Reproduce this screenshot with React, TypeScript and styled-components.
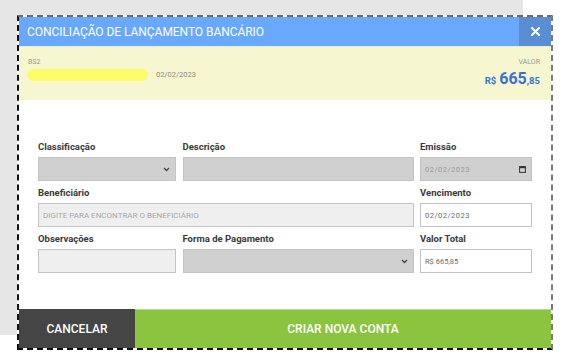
import React from "react";
import styled, { createGlobalStyle } from "styled-components";

const Global = createGlobalStyle`
  html, body { margin: 0; padding: 0; background: #ffffff; }
  body { font-family: Roboto, "Liberation Sans", sans-serif; }
  * { box-sizing: border-box; }
`;

const Stage = styled.div`
  position: relative;
  width: 561px;
  height: 359px;
  overflow: hidden;
`;

const Backdrop = styled.div`
  width: 523px;
  height: 335px;
  background: #e6e6e6;
`;

const Modal = styled.div`
  position: absolute;
  left: 17px;
  top: 15px;
  width: 536px;
  height: 335px;
  display: flex;
  flex-direction: column;
  background: #ffffff;
  border: 2px dashed #111;
  border-top-color: #6b6b6b;
  border-right-color: #7a7a7a;
`;

const Header = styled.div`
  height: 29px;
  display: flex;
  align-items: stretch;
  background: #68a8fe;
`;

const Title = styled.div`
  flex: 1;
  display: flex;
  align-items: center;
  padding-left: 8px;
  color: #ffffff;
  font-size: 12px;
  letter-spacing: -0.05px;
`;

const CloseButton = styled.div`
  width: 32px;
  display: flex;
  align-items: center;
  justify-content: center;
  background: #5a8dd1;
`;

const Summary = styled.div`
  height: 54px;
  display: flex;
  justify-content: space-between;
  padding: 11px 11px 0 8px;
  background: #f6f7d1;
  border-top: 1px solid #e8ecd0;
`;

const SummaryLeft = styled.div`
  display: flex;
  flex-direction: column;
  gap: 2px;
`;

const Bank = styled.div`
  color: #9b9b8c;
  font-size: 7px;
  line-height: 9px;
  padding-left: 1px;
`;

const SummaryLine = styled.div`
  display: flex;
  align-items: center;
  gap: 8px;
`;

const Highlight = styled.div`
  width: 121px;
  height: 12px;
  border-radius: 6px;
  background: #fdfd6c;
`;

const SummaryDate = styled.div`
  color: #8e8e86;
  font-size: 7.5px;
  margin-top: -2px;
`;

const SummaryRight = styled.div`
  display: flex;
  flex-direction: column;
  align-items: flex-end;
  gap: 2px;
`;

const ValueLabel = styled.div`
  color: #9b9b8c;
  font-size: 7px;
  line-height: 9px;
`;

const Amount = styled.div`
  color: #3a6fd6;
  font-weight: 700;
  display: flex;
  align-items: baseline;
`;

const AmountSmall = styled.span<{ $gap?: number }>`
  font-size: 9.5px;
  margin-right: ${(p) => p.$gap ?? 0}px;
`;

const AmountBig = styled.span`
  font-size: 16px;
`;

const Body = styled.div`
  flex: 1;
  padding: 41px 19px 0 19px;
`;

const FormGrid = styled.div`
  display: grid;
  grid-template-columns: 138px 1fr 112px;
  column-gap: 6.5px;
  row-gap: 6px;
`;

const Field = styled.div<{ $span?: number }>`
  display: flex;
  flex-direction: column;
  gap: 4px;
  grid-column: span ${(p) => p.$span ?? 1};
`;

const Label = styled.div`
  color: #3a3a3a;
  font-size: 9.5px;
  font-weight: 700;
  line-height: 12px;
`;

type Tone = "gray" | "light" | "white";

const toneBg: Record<Tone, string> = {
  gray: "#d0d0d0",
  light: "#efefef",
  white: "#ffffff",
};

const Box = styled.div<{ $tone: Tone }>`
  height: 24px;
  display: flex;
  align-items: center;
  justify-content: space-between;
  padding: 0 5px 0 4px;
  background: ${(p) => toneBg[p.$tone]};
  border: 1px solid #c4c4c4;
  color: #888;
  font-size: 7.5px;
`;

const Placeholder = styled.span`
  color: #a8a8a8;
  font-size: 8px;
`;

const Value = styled.span<{ $dim?: boolean; $spaced?: boolean }>`
  color: ${(p) => (p.$dim ? "#9a9a9a" : "#6a6a6a")};
  font-size: 7.5px;
  letter-spacing: ${(p) => (p.$spaced ? 0.5 : 0)}px;
`;

const Footer = styled.div`
  height: 39px;
  display: flex;
  border-top: 1px solid #b4dc88;
`;

const FooterButton = styled.div<{ $primary?: boolean }>`
  width: ${(p) => (p.$primary ? "auto" : "116px")};
  flex: ${(p) => (p.$primary ? 1 : "none")};
  display: flex;
  align-items: center;
  justify-content: center;
  background: ${(p) => (p.$primary ? "#8bc43f" : "#454545")};
  color: #ffffff;
  font-size: 12px;
  font-weight: 500;
  margin-top: ${(p) => (p.$primary ? 0 : -1)}px;
`;

const Chevron = () => (
  <svg width="7" height="5" viewBox="0 0 7 5">
    <path d="M1 1 L3.5 3.5 L6 1" fill="none" stroke="#444" strokeWidth="1.3" />
  </svg>
);

const Calendar = () => (
  <svg width="7" height="7" viewBox="0 0 7 7">
    <rect x="0.6" y="0.6" width="5.8" height="5.8" fill="none" stroke="#333" strokeWidth="1" />
    <rect x="0.6" y="0.6" width="5.8" height="1.6" fill="#333" />
  </svg>
);

const CloseIcon = () => (
  <svg width="9" height="9" viewBox="0 0 9 9">
    <path d="M1 1 L8 8 M8 1 L1 8" stroke="#fff" strokeWidth="2" strokeLinecap="round" />
  </svg>
);

export default function App() {
  return (
    <Stage>
      <Global />
      <Backdrop />
      <Modal>
        <Header>
          <Title>CONCILIAÇÃO DE LANÇAMENTO BANCÁRIO</Title>
          <CloseButton>
            <CloseIcon />
          </CloseButton>
        </Header>
        <Summary>
          <SummaryLeft>
            <Bank>BS2</Bank>
            <SummaryLine>
              <Highlight />
              <SummaryDate>02/02/2023</SummaryDate>
            </SummaryLine>
          </SummaryLeft>
          <SummaryRight>
            <ValueLabel>VALOR</ValueLabel>
            <Amount>
              <AmountSmall $gap={3}>R$</AmountSmall>
              <AmountBig>665</AmountBig>
              <AmountSmall>,85</AmountSmall>
            </Amount>
          </SummaryRight>
        </Summary>
        <Body>
          <FormGrid>
            <Field>
              <Label>Classificação</Label>
              <Box $tone="gray">
                <span />
                <Chevron />
              </Box>
            </Field>
            <Field>
              <Label>Descrição</Label>
              <Box $tone="gray" />
            </Field>
            <Field>
              <Label>Emissão</Label>
              <Box $tone="gray">
                <Value $dim $spaced>02/02/2023</Value>
                <Calendar />
              </Box>
            </Field>
            <Field $span={2}>
              <Label>Beneficiário</Label>
              <Box $tone="light">
                <Placeholder>DIGITE PARA ENCONTRAR O BENEFICIÁRIO</Placeholder>
              </Box>
            </Field>
            <Field>
              <Label>Vencimento</Label>
              <Box $tone="white">
                <Value $spaced>02/02/2023</Value>
              </Box>
            </Field>
            <Field>
              <Label>Observações</Label>
              <Box $tone="light" />
            </Field>
            <Field>
              <Label>Forma de Pagamento</Label>
              <Box $tone="gray">
                <span />
                <Chevron />
              </Box>
            </Field>
            <Field>
              <Label>Valor Total</Label>
              <Box $tone="white">
                <Value>R$ 665,85</Value>
              </Box>
            </Field>
          </FormGrid>
        </Body>
        <Footer>
          <FooterButton>CANCELAR</FooterButton>
          <FooterButton $primary>CRIAR NOVA CONTA</FooterButton>
        </Footer>
      </Modal>
    </Stage>
  );
}
